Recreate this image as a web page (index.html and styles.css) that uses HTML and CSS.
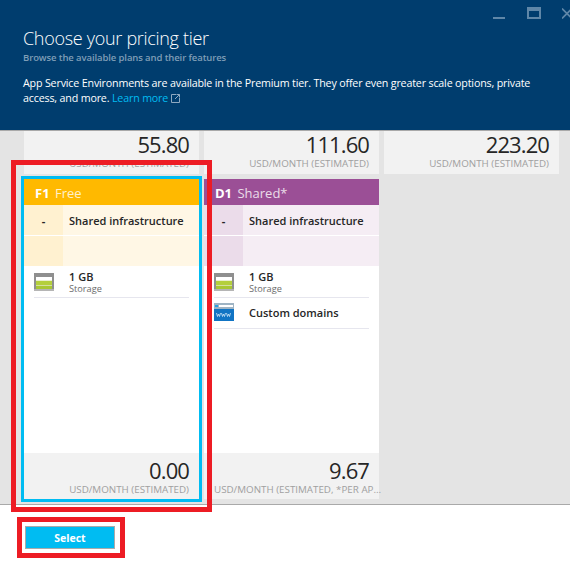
FILE: index.html
```html
<!DOCTYPE html>
<html lang="en">
<head>
    <meta charset="UTF-8">
    <meta name="viewport" content="width=device-width, initial-scale=1.0">
    <title>Choose your pricing tier</title>
    <link rel="stylesheet" href="styles.css">
</head>
<body>
    <div class="page">
        <div class="header">
            <div class="window-controls">
                <span class="win-min"></span>
                <span class="win-max"></span>
                <svg class="win-close" width="8" height="11" viewBox="0 0 8 11"><path d="M0 0.5 L10 10.5 M0 10.5 L10 0.5" stroke="#5f87a8" stroke-width="1.6" fill="none"/></svg>
            </div>
            <h1 class="title">Choose your pricing tier</h1>
            <div class="subtitle">Browse the available plans and their features</div>
            <p class="notice">App Service Environments are available in the Premium tier. They offer even greater scale options, private access, and more. <a class="link" href="#">Learn more</a>
                <svg class="ext-icon" width="9" height="9" viewBox="0 0 9 9"><path d="M5 .5H.5v8h8V4M4 5 8.5.5M5.5.5h3v3" stroke="#8fa9c0" fill="none"/></svg>
            </p>
        </div>

        <div class="content">
            <div class="tiers">
                <div class="price-only">
                    <div class="price">55.80</div>
                    <div class="price-label">USD/MONTH (ESTIMATED)</div>
                </div>
                <div class="price-only">
                    <div class="price">111.60</div>
                    <div class="price-label">USD/MONTH (ESTIMATED)</div>
                </div>
                <div class="price-only">
                    <div class="price">223.20</div>
                    <div class="price-label">USD/MONTH (ESTIMATED)</div>
                </div>

                <div class="card card-free">
                    <div class="card-head"><b>F1</b> <span class="tier-name">Free</span></div>
                    <div class="spec-row">
                        <div class="spec-mark">-</div>
                        <div class="spec-text">Shared infrastructure</div>
                    </div>
                    <div class="spec-row">
                        <div class="spec-mark"></div>
                        <div class="spec-text"></div>
                    </div>
                    <div class="features">
                        <div class="feature">
                            <svg class="feature-icon" width="20" height="18" viewBox="0 0 20 18"><rect width="20" height="18" fill="#8f8f8f"/><rect y="16" width="20" height="2" fill="#b5b5b5"/><rect x="2" y="4" width="16" height="12" fill="#d4dfa0"/><rect x="2" y="4" width="16" height="3.5" fill="#fff"/><rect x="2" y="8" width="16" height="4" fill="#b4cf3c"/><rect x="2" y="13" width="16" height="3" fill="#a9c734"/></svg>
                            <div class="feature-text">
                                <div class="feature-name">1 GB</div>
                                <div class="feature-sub">Storage</div>
                            </div>
                        </div>
                    </div>
                    <div class="card-foot">
                        <div class="price">0.00</div>
                        <div class="price-label">USD/MONTH (ESTIMATED)</div>
                    </div>
                </div>

                <div class="card card-shared">
                    <div class="card-head"><b>D1</b> <span class="tier-name">Shared*</span></div>
                    <div class="spec-row">
                        <div class="spec-mark">-</div>
                        <div class="spec-text">Shared infrastructure</div>
                    </div>
                    <div class="spec-row">
                        <div class="spec-mark"></div>
                        <div class="spec-text"></div>
                    </div>
                    <div class="features">
                        <div class="feature">
                            <svg class="feature-icon" width="20" height="18" viewBox="0 0 20 18"><rect width="20" height="18" fill="#8f8f8f"/><rect y="16" width="20" height="2" fill="#b5b5b5"/><rect x="2" y="4" width="16" height="12" fill="#d4dfa0"/><rect x="2" y="4" width="16" height="3.5" fill="#fff"/><rect x="2" y="8" width="16" height="4" fill="#b4cf3c"/><rect x="2" y="13" width="16" height="3" fill="#a9c734"/></svg>
                            <div class="feature-text">
                                <div class="feature-name">1 GB</div>
                                <div class="feature-sub">Storage</div>
                            </div>
                        </div>
                        <div class="feature feature-single">
                            <svg class="feature-icon" width="20" height="18" viewBox="0 0 20 18"><rect width="20" height="18" fill="#1174c4"/><rect width="20" height="6" fill="#9fb4c4"/><rect x="5" y="2" width="14" height="2" fill="#fff"/><rect x="1" y="2" width="3" height="2" fill="#2aa0e0"/><path d="M2.5 10l1 3.5 1-2.5 1 2.5 1-3.5M7.5 10l1 3.5 1-2.5 1 2.5 1-3.5M12.5 10l1 3.5 1-2.5 1 2.5 1-3.5" stroke="#cfe6f7" stroke-width=".8" fill="none"/></svg>
                            <div class="feature-text">
                                <div class="feature-name">Custom domains</div>
                            </div>
                        </div>
                    </div>
                    <div class="card-foot">
                        <div class="price">9.67</div>
                        <div class="price-label">USD/MONTH (ESTIMATED, *PER AP…</div>
                    </div>
                </div>
            </div>
        </div>

        <div class="footer">
            <button class="select-button">Select</button>
        </div>

        <!-- annotations drawn on top of the screenshot -->
        <div class="mark-red mark-card"></div>
        <div class="mark-blue"></div>
        <div class="mark-red mark-button"></div>
    </div>
</body>
</html>
```

FILE: styles.css
```css
* {
    box-sizing: border-box;
}
body {
    margin: 0;
    font-family: "Open Sans", "Noto Sans", sans-serif;
    color: #262626;
}
.page {
    position: relative;
    display: flex;
    flex-direction: column;
    width: 570px;
    height: 567px;
    overflow: hidden;
    background-color: #fff;
}

.header {
    position: relative;
    z-index: 1;
    height: 131px;
    padding: 26px 23px 0;
    background-color: #003d6e;
    border-bottom: 1px solid #a9a9a9;
    color: #fff;
}
.window-controls {
    position: absolute;
    top: 0;
    left: 0;
}
.win-min {
    position: absolute;
    left: 493px;
    top: 17px;
    width: 12px;
    height: 2px;
    background-color: #5f87a8;
}
.win-max {
    position: absolute;
    left: 527px;
    top: 7px;
    width: 14px;
    height: 12px;
    border: 2px solid #5f87a8;
    border-top-width: 4px;
}
.win-close {
    position: absolute;
    left: 562px;
    top: 8px;
}
.title {
    margin: 0;
    font-size: 18px;
    font-weight: 300;
    line-height: 24px;
    letter-spacing: -.3px;
}
.subtitle {
    margin-top: 1px;
    font-size: 9.5px;
    font-weight: 600;
    line-height: 13px;
    letter-spacing: -.1px;
    color: #7f9eb7;
}
.notice {
    margin: 12px 0 0;
    width: 530px;
    font-size: 10.7px;
    line-height: 15px;
    letter-spacing: -.17px;
}
.link {
    color: #00bcf2;
    text-decoration: none;
}
.ext-icon {
    vertical-align: -1px;
}

.content {
    height: 373px;
    padding-left: 24px;
    background-color: #e4e4e4;
}
.tiers {
    display: grid;
    grid-template-columns: repeat(3, 175px);
    grid-template-rows: 43px 320px;
    gap: 5px;
}
.price-only,
.card-foot {
    padding: 0 10px;
    background-color: #f2f2f2;
    text-align: right;
}
.price {
    font-size: 22px;
    font-weight: 500;
    line-height: 27px;
    letter-spacing: -.9px;
    color: #262626;
}
.price-label {
    margin-top: -1px;
    font-size: 9.8px;
    line-height: 13px;
    color: #a0a0a0;
    white-space: nowrap;
}

.card {
    display: flex;
    flex-direction: column;
    background-color: #fff;
}
.card-head {
    height: 26px;
    padding-left: 11px;
    font-size: 13px;
    line-height: 28px;
    color: #fff;
}
.tier-name {
    margin-left: 2px;
    opacity: .8;
}
.spec-row {
    display: flex;
    height: 31px;
    border-bottom: 1px solid #fff;
    font-size: 11px;
    font-weight: 600;
    line-height: 32px;
}
.spec-row + .spec-row {
    height: 30px;
    border-bottom: 0;
}
.spec-mark {
    flex: 0 0 39px;
    font-weight: 700;
    text-align: center;
}
.spec-text {
    flex: 1;
    padding-left: 6px;
}
.card-free .card-head {
    background-color: #ffb900;
}
.card-free .spec-mark {
    background-color: #fff1d0;
}
.card-free .spec-text {
    background-color: #fff7e5;
}
.card-shared .card-head {
    background-color: #9b4f96;
}
.card-shared .spec-mark {
    background-color: #ebdcea;
}
.card-shared .spec-text {
    background-color: #f5edf4;
}

.features {
    flex: 1;
    padding: 0 10px;
}
.feature {
    display: flex;
    align-items: center;
    height: 32px;
    border-bottom: 1px solid #e6e6ee;
    padding-top: 1px;
}
.feature-single {
    height: 31px;
    padding-top: 0;
    padding-bottom: 2px;
}
.feature-icon {
    flex: none;
    margin-right: 15px;
}
.feature-name {
    font-size: 11px;
    font-weight: 600;
    line-height: 13px;
}
.feature-sub {
    font-size: 9.2px;
    line-height: 11px;
    color: #6b6b6b;
}
.card-foot {
    height: 46px;
    padding-top: 4px;
}

.footer {
    flex: 1;
    padding: 21px 25px 0;
    border-top: 1px solid #a9a9a9;
}
.select-button {
    display: block;
    width: 90px;
    height: 23px;
    padding: 0;
    background-color: #00bcf2;
    border: 1px solid #aaa;
    color: #fff;
    font-family: inherit;
    font-size: 10.5px;
    font-weight: 700;
}

.mark-red,
.mark-blue {
    position: absolute;
    z-index: 2;
    pointer-events: none;
}
.mark-red {
    border: 5px solid #ed1c24;
}
.mark-card {
    left: 11px;
    top: 160px;
    width: 201px;
    height: 352px;
}
.mark-button {
    left: 17px;
    top: 517px;
    width: 108px;
    height: 41px;
}
.mark-blue {
    left: 21px;
    top: 176px;
    width: 181px;
    height: 326px;
    border: 3px solid #00bcf2;
}
```
